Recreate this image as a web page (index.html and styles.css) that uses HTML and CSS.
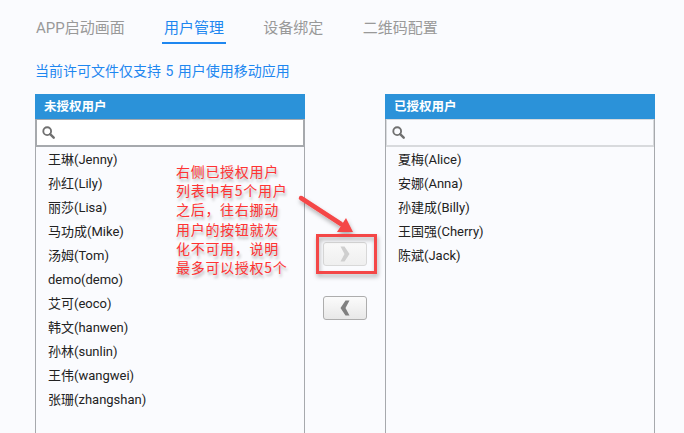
FILE: index.html
```html
<!DOCTYPE html>
<html lang="zh">
<head>
<meta charset="utf-8">
<title>用户管理</title>
<link rel="stylesheet" href="styles.css">
</head>
<body>
<div class="page">
  <nav class="tabs">
    <span class="tab">APP启动画面</span>
    <span class="tab active">用户管理</span>
    <span class="tab">设备绑定</span>
    <span class="tab">二维码配置</span>
  </nav>
  <p class="notice">当前许可文件仅支持 5 用户使用移动应用</p>
  <div class="transfer">
    <section class="panel">
      <h2 class="panel-head">未授权用户</h2>
      <div class="search dark">
        <svg class="search-icon" viewBox="0 0 14 14"><circle cx="5.6" cy="5.6" r="4.2" fill="none" stroke="#707070" stroke-width="2"/><path d="M8.8 8.8L12.6 12.6" stroke="#707070" stroke-width="2.6" stroke-linecap="round"/></svg>
      </div>
      <ul class="list">
        <li>王琳(Jenny)</li>
        <li>孙红(Lily)</li>
        <li>丽莎(Lisa)</li>
        <li>马功成(Mike)</li>
        <li>汤姆(Tom)</li>
        <li>demo(demo)</li>
        <li>艾可(eoco)</li>
        <li>韩文(hanwen)</li>
        <li>孙林(sunlin)</li>
        <li>王伟(wangwei)</li>
        <li>张珊(zhangshan)</li>
      </ul>
    </section>
    <div class="actions">
      <button class="move disabled" type="button"><svg viewBox="0 0 10 16"><path d="M0.5 0.5H4.5L9.5 8L4.5 15.5H0.5L4.5 8Z"/></svg></button>
      <button class="move" type="button"><svg viewBox="0 0 10 16"><path d="M9.5 0.5H5.5L0.5 8L5.5 15.5H9.5L5.5 8Z"/></svg></button>
    </div>
    <section class="panel">
      <h2 class="panel-head">已授权用户</h2>
      <div class="search">
        <svg class="search-icon" viewBox="0 0 14 14"><circle cx="5.6" cy="5.6" r="4.2" fill="none" stroke="#707070" stroke-width="2"/><path d="M8.8 8.8L12.6 12.6" stroke="#707070" stroke-width="2.6" stroke-linecap="round"/></svg>
      </div>
      <ul class="list">
        <li>夏梅(Alice)</li>
        <li>安娜(Anna)</li>
        <li>孙建成(Billy)</li>
        <li>王国强(Cherry)</li>
        <li>陈斌(Jack)</li>
      </ul>
    </section>
  </div>
  <div class="note">右侧已授权用户<br>列表中有5个用户<br>之后，往右挪动<br>用户的按钮就灰<br>化不可用，说明<br>最多可以授权5个</div>
  <svg class="markup" viewBox="0 0 684 433">
    <defs>
      <filter id="soft" x="-20%" y="-20%" width="150%" height="150%"><feDropShadow dx="1" dy="3" stdDeviation="2" flood-color="#000" flood-opacity=".3"/></filter>
    </defs>
    <g filter="url(#soft)">
      <rect x="317.5" y="235.5" width="58" height="37" fill="none" stroke="#f44747" stroke-width="3"/>
      <path d="M301 198L341 224" stroke="#f44747" stroke-width="4.5" stroke-linecap="round"/>
      <path d="M353 232L337 232L346 218Z" fill="#f44747"/>
    </g>
  </svg>
</div>
</body>
</html>
```
FILE: styles.css
```css
* { box-sizing: border-box; }
html, body { margin: 0; height: 100%; overflow: hidden; }
body {
  background: #fafbfe;
  font-family: Roboto, "Noto Sans CJK SC", sans-serif;
  font-size: 13px;
  color: #222;
}
.page { position: relative; width: 684px; height: 433px; overflow: hidden; padding: 15px 0 0 35px; }
.tabs { display: flex; gap: 39.3px; height: 29px; margin-left: 1px; }
.tab {
  font-family: Roboto, "Noto Sans CJK SC", sans-serif;
  font-size: 15px; line-height: 26px; color: #999; height: 29px; white-space: nowrap;
}
.tab.active { color: #1e87f0; border-bottom: 2px solid #1e87f0; padding: 0 2px; margin: 0 -2px; }
.notice {
  margin: 18px 0 0; font-family: Roboto, "Noto Sans CJK SC", sans-serif;
  font-size: 14px; line-height: 18px; word-spacing: 1px; color: #1e87f0; white-space: nowrap;
}
.transfer { display: flex; margin-top: 14px; }
.panel { width: 270px; height: 400px; border: solid #a6a9ad; border-width: 0 1px; flex: none; }
.panel-head {
  margin: 0 -1px; height: 25px; padding-left: 9px; background: #2b92d9; color: #fff;
  font-size: 12.5px; font-weight: 700; line-height: 24px;
  font-family: "Noto Sans CJK SC", sans-serif;
}
.search { height: 28px; border: 1px solid #d8dadd; border-width: 1px 1px 2px; display: flex; align-items: center; padding-left: 5px; }
.search.dark { border-color: #a6a9ad; background: #fff; }
.search-icon { width: 13px; height: 13px; }
.list { list-style: none; margin: 0; padding: 1px 0 0 12px; }
.list li { height: 24px; line-height: 24px; white-space: nowrap; color: #222; }
.actions { width: 80px; flex: none; display: flex; flex-direction: column; align-items: center; gap: 30px; padding-top: 148px; }
.move {
  width: 44px; height: 24px; padding: 0; display: flex; align-items: center; justify-content: center;
  border: 1px solid #adadad; border-radius: 3px;
  background: linear-gradient(#fbfbfb, #e8e8e8);
}
.move svg { width: 10px; height: 16px; fill: #808080; }
.move.disabled { border-color: #d8d8d8; background: linear-gradient(#f9f9f9, #efefef); }
.move.disabled svg { fill: #cfcfcf; }
.note {
  position: absolute; left: 176px; top: 162px; white-space: nowrap;
  font-family: "Noto Sans CJK SC", sans-serif; font-size: 14px; line-height: 19.2px; letter-spacing: .7px;
  color: #f33; text-shadow: 1px 3px 3px rgba(0,0,0,.3);
}
.markup { position: absolute; left: 0; top: 0; width: 684px; height: 433px; pointer-events: none; }
```
